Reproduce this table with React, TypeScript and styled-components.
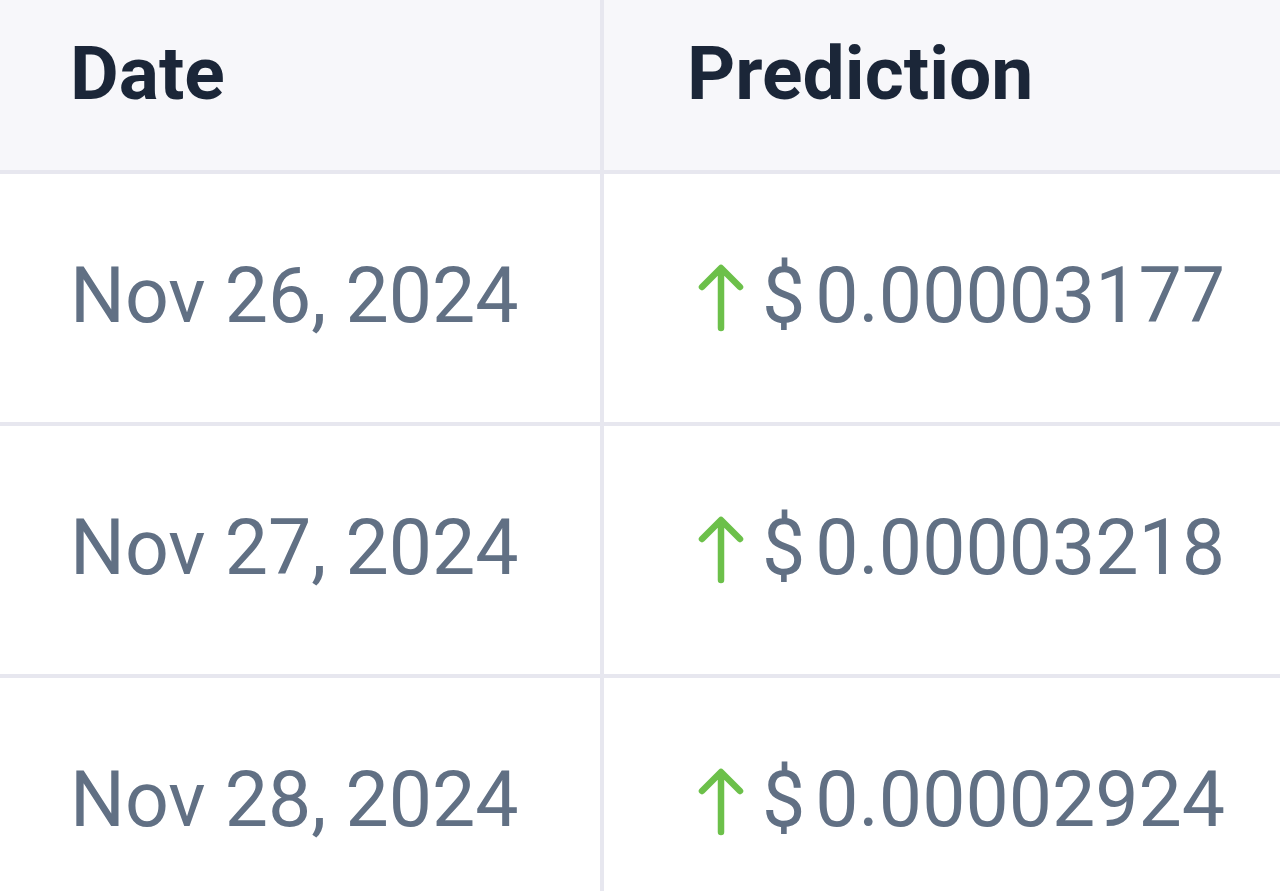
import React from "react";
import styled, { createGlobalStyle } from "styled-components";

const Global = createGlobalStyle`
  html, body { margin: 0; padding: 0; background: #ffffff; }
  body { width: 1280px; height: 891px; overflow: hidden; font-family: Roboto, "Liberation Sans", sans-serif; }
`;

const Table = styled.div`
  display: grid;
  grid-template-columns: 600px 1fr;
  grid-template-rows: 170px 248px 248px 248px;
  gap: 4px;
  background: #e7e7ef;
  width: 1280px;
`;

const HeadCell = styled.div<{ $pad: number }>`
  background: #f7f7fa;
  display: flex;
  align-items: center;
  padding-left: ${(p) => p.$pad}px;
  padding-bottom: 24px;
  font-size: 75px;
  font-weight: 700;
  color: #1b2638;
`;

const Cell = styled.div<{ $pad: number }>`
  background: #ffffff;
  display: flex;
  align-items: center;
  padding-left: ${(p) => p.$pad}px;
  padding-bottom: 4px;
  font-size: 77px;
  font-weight: 400;
  color: #617084;
  white-space: nowrap;
`;

const Arrow = styled.svg`
  width: 46px;
  height: 68px;
  margin-right: 18px;
  flex: none;
  margin-top: 4px;
`;

const Dollar = styled.span`
  margin-right: 10px;
`;

const rows = [
  { date: "Nov 26, 2024", price: "0.00003177" },
  { date: "Nov 27, 2024", price: "0.00003218" },
  { date: "Nov 28, 2024", price: "0.00002924" },
];

const UpArrow = () => (
  <Arrow viewBox="0 0 46 68" fill="none">
    <path
      d="M23 64 V5 M4 23 L23 4 L42 23"
      stroke="#6cc04a"
      strokeWidth="6.5"
      strokeLinecap="round"
      strokeLinejoin="round"
    />
  </Arrow>
);

export default function App() {
  return (
    <>
      <Global />
      <Table>
        <HeadCell $pad={70}>Date</HeadCell>
        <HeadCell $pad={83}>Prediction</HeadCell>
        {rows.map((r) => (
          <React.Fragment key={r.date}>
            <Cell $pad={70}>{r.date}</Cell>
            <Cell $pad={94}>
              <UpArrow />
              <Dollar>$</Dollar>
              {r.price}
            </Cell>
          </React.Fragment>
        ))}
      </Table>
    </>
  );
}
